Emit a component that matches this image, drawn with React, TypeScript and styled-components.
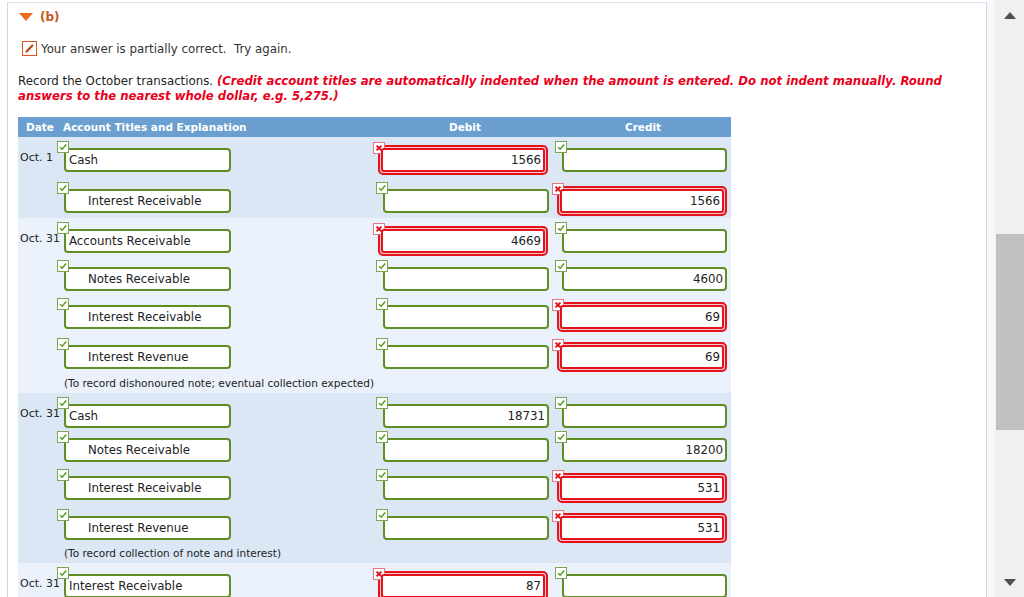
import React from 'react';
import styled, { createGlobalStyle } from 'styled-components';

/* types */
type Status = 'ok' | 'bad';
type Amount = { value?: string; status: Status };
type Entry = {
  date?: string;
  account: string;
  indent?: boolean;
  debit: Amount;
  credit: Amount;
  height: number;
};
type Group = {
  shade: 'dark' | 'light';
  entries: Entry[];
  note?: string;
  noteHeight?: number;
};

const ok = (value?: string): Amount => ({ value, status: 'ok' });
const bad = (value?: string): Amount => ({ value, status: 'bad' });

const groups: Group[] = [
  {
    shade: 'dark',
    entries: [
      { date: 'Oct. 1', account: 'Cash', debit: bad('1566'), credit: ok(), height: 41 },
      { account: 'Interest Receivable', indent: true, debit: ok(), credit: bad('1566'), height: 40 },
    ],
  },
  {
    shade: 'light',
    entries: [
      { date: 'Oct. 31', account: 'Accounts Receivable', debit: bad('4669'), credit: ok(), height: 38 },
      { account: 'Notes Receivable', indent: true, debit: ok(), credit: ok('4600'), height: 38 },
      { account: 'Interest Receivable', indent: true, debit: ok(), credit: bad('69'), height: 40 },
      { account: 'Interest Revenue', indent: true, debit: ok(), credit: bad('69'), height: 40 },
    ],
    note: '(To record dishonoured note; eventual collection expected)',
    noteHeight: 19,
  },
  {
    shade: 'dark',
    entries: [
      { date: 'Oct. 31', account: 'Cash', debit: ok('18731'), credit: ok(), height: 34 },
      { account: 'Notes Receivable', indent: true, debit: ok(), credit: ok('18200'), height: 38 },
      { account: 'Interest Receivable', indent: true, debit: ok(), credit: bad('531'), height: 40 },
      { account: 'Interest Revenue', indent: true, debit: ok(), credit: bad('531'), height: 38 },
    ],
    note: '(To record collection of note and interest)',
    noteHeight: 20,
  },
  {
    shade: 'light',
    entries: [
      { date: 'Oct. 31', account: 'Interest Receivable', debit: bad('87'), credit: ok(), height: 40 },
    ],
  },
];

const GlobalStyle = createGlobalStyle`
  html, body {
    margin: 0;
    padding: 0;
    overflow: hidden;
    background: #ffffff;
  }
  body {
    font-family: 'DejaVu Sans', Verdana, sans-serif;
    font-size: 11.8px;
    color: #222222;
  }
`;

/* icons */
const CheckMark: React.FC<{ status: Status }> = ({ status }) => (
  <MarkBox status={status}>
    <svg width="10" height="10" viewBox="0 0 10 10">
      {status === 'ok' ? (
        <path d="M2 5.2 L4.2 7.2 L8.2 2.6" fill="none" stroke="#5c9a1e" strokeWidth="1.5" />
      ) : (
        <path d="M2.6 2.6 L7.4 7.4 M7.4 2.6 L2.6 7.4" fill="none" stroke="#e2101c" strokeWidth="2" />
      )}
    </svg>
  </MarkBox>
);

const PartialIcon = () => (
  <PartialBox>
    <svg width="13" height="13" viewBox="0 0 13 13">
      <path d="M3.6 9.6 L9.4 3.6" stroke="#c0461a" strokeWidth="2.2" strokeLinecap="round" />
    </svg>
  </PartialBox>
);

const AmountField: React.FC<{ amount: Amount; side: 'debit' | 'credit' }> = ({ amount, side }) => (
  <FieldSlot side={side}>
    {amount.status === 'bad' ? (
      <BadRing>
        <CheckMark status="bad" />
        <BadInput>{amount.value}</BadInput>
      </BadRing>
    ) : (
      <GoodInput wide={side === 'debit'}>
        <CheckMark status="ok" />
        {amount.value}
      </GoodInput>
    )}
  </FieldSlot>
);

const App: React.FC = () => {
  return (
    <>
      <GlobalStyle />
      <Screen>
        <Frame>
          <Content>
            <PartTitle>
              <Caret />
              <span>(b)</span>
            </PartTitle>

            <Feedback>
              <PartialIcon />
              <span>Your answer is partially correct.&nbsp; Try again.</span>
            </Feedback>

            <Instructions>
              Record the October transactions.{' '}
              <Warn>
                (Credit account titles are automatically indented when the amount is entered. Do not indent
                manually. Round answers to the nearest whole dollar, e.g. 5,275.)
              </Warn>
            </Instructions>

            <Journal>
              <HeadRow>
                <HeadCell>Date</HeadCell>
                <HeadCell>Account Titles and Explanation</HeadCell>
                <HeadCell center>Debit</HeadCell>
                <HeadCell center>Credit</HeadCell>
              </HeadRow>
              {groups.map((group, gi) => (
                <GroupBlock key={gi} shade={group.shade}>
                  {group.entries.map((entry, ei) => (
                    <EntryRow key={ei} h={entry.height}>
                      <DateCell>{entry.date}</DateCell>
                      <AccountSlot>
                        <AccountInput indent={entry.indent}>
                          <CheckMark status="ok" />
                          {entry.account}
                        </AccountInput>
                      </AccountSlot>
                      <AmountField amount={entry.debit} side="debit" />
                      <AmountField amount={entry.credit} side="credit" />
                    </EntryRow>
                  ))}
                  {group.note && <NoteRow h={group.noteHeight ?? 20}>{group.note}</NoteRow>}
                </GroupBlock>
              ))}
            </Journal>
          </Content>
        </Frame>
        <Gutter />
        <ScrollBar>
          <Arrow dir="up" />
          <Track>
            <Thumb />
          </Track>
          <Arrow dir="down" />
        </ScrollBar>
      </Screen>
    </>
  );
};

const Screen = styled.div`
  width: 1024px;
  height: 597px;
  display: flex;
  overflow: hidden;
`;

const Frame = styled.div`
  width: 979px;
  margin: 2px 0 0 7px;
  border-top: 1px solid #dde3ea;
  border-left: 1px solid #cfd8e4;
  border-right: 1px solid #cfd8e4;
  overflow: hidden;
`;

const Gutter = styled.div`
  width: 8px;
  background: #f5f9fc;
`;

const Content = styled.div`
  padding: 6px 0 0 10px;
`;

const PartTitle = styled.div`
  display: flex;
  align-items: center;
  gap: 7px;
  height: 16px;
  padding-left: 1px;
  font-weight: bold;
  font-size: 12px;
  color: #c4561a;
`;

const Caret = styled.div`
  width: 0;
  height: 0;
  border-left: 7px solid transparent;
  border-right: 7px solid transparent;
  border-top: 8px solid #ef6a1e;
`;

const Feedback = styled.div`
  display: flex;
  align-items: center;
  gap: 4px;
  margin-top: 16px;
  padding-left: 4px;
  color: #333333;
`;

const PartialBox = styled.div`
  width: 13px;
  height: 13px;
  border: 1.5px solid #d9561f;
  background: #ffffff;
  display: flex;
`;

const Instructions = styled.p`
  margin: 18px 0 0;
  width: 940px;
  line-height: 15px;
  color: #222222;
`;

const Warn = styled.span`
  color: #e8001c;
  font-weight: bold;
  font-style: italic;
  font-size: 11.7px;
`;

const Journal = styled.div`
  width: 713px;
  margin-top: 13px;
`;

const cols = '40px 317px 180px 176px';

const HeadRow = styled.div`
  display: grid;
  grid-template-columns: ${cols};
  height: 20px;
  align-items: center;
  background: #6a9fcf;
  color: #ffffff;
  font-weight: bold;
  font-size: 10.5px;
`;

const HeadCell = styled.div<{ center?: boolean }>`
  padding-left: ${(p) => (p.center ? 0 : 8)}px;
  text-align: ${(p) => (p.center ? 'center' : 'left')};
  &:nth-child(2) {
    padding-left: 5px;
  }
`;

const GroupBlock = styled.div<{ shade: 'dark' | 'light' }>`
  background: ${(p) => (p.shade === 'dark' ? '#dce7f5' : '#eaf1fb')};
`;

const EntryRow = styled.div<{ h: number }>`
  display: grid;
  grid-template-columns: ${cols};
  height: ${(p) => p.h}px;
  padding-top: 11px;
  box-sizing: border-box;
`;

const DateCell = styled.div`
  padding: 3px 0 0 2px;
  white-space: nowrap;
  line-height: 14px;
  font-size: 11px;
`;

const AccountSlot = styled.div`
  padding-left: 6px;
`;

const inputBase = `
  position: relative;
  box-sizing: border-box;
  height: 24px;
  display: flex;
  align-items: center;
  background: #ffffff;
  white-space: nowrap;
`;

const AccountInput = styled.div<{ indent?: boolean }>`
  ${inputBase}
  width: 167px;
  border: 2px solid #5e8e24;
  border-radius: 4px;
  padding-left: ${(p) => (p.indent ? 22 : 3)}px;
  font-size: 11.8px;
`;

const FieldSlot = styled.div<{ side: 'debit' | 'credit' }>`
  padding-left: ${(p) => (p.side === 'debit' ? 8 : 7)}px;
`;

const GoodInput = styled.div<{ wide?: boolean }>`
  ${inputBase}
  width: ${(p) => (p.wide ? 166 : 165)}px;
  border: 2px solid #5e8e24;
  border-radius: 4px;
  justify-content: flex-end;
  padding-right: 2px;
`;

const BadRing = styled.div`
  position: relative;
  box-sizing: border-box;
  width: 170px;
  height: 30px;
  margin: -3px 0 0 -5px;
  padding: 1px;
  border: 2px solid #e4141e;
  border-radius: 5px;
  background: #f7c4c7;
  & > span {
    top: -5px;
    left: -7px;
  }
`;

const BadInput = styled.div`
  ${inputBase}
  height: 100%;
  border: 2px solid #e4141e;
  border-radius: 3px;
  justify-content: flex-end;
  padding-right: 2px;
`;

const MarkBox = styled.span<{ status: Status }>`
  position: absolute;
  top: -9px;
  left: -9px;
  width: 12px;
  height: 12px;
  box-sizing: border-box;
  border: 1px solid ${(p) => (p.status === 'ok' ? '#7ea64e' : '#e07a80')};
  background: #ffffff;
  display: flex;
  align-items: center;
  justify-content: center;
`;

const NoteRow = styled.div<{ h: number }>`
  height: ${(p) => p.h}px;
  line-height: ${(p) => p.h}px;
  padding-left: 46px;
  font-size: 10.5px;
`;

const ScrollBar = styled.div`
  width: 29px;
  display: flex;
  flex-direction: column;
  background: #f0f0f0;
`;

const Arrow = styled.div<{ dir: 'up' | 'down' }>`
  height: 30px;
  display: flex;
  align-items: center;
  justify-content: center;
  &::before {
    content: '';
    border-left: 6px solid transparent;
    border-right: 6px solid transparent;
    ${(p) => (p.dir === 'up' ? 'border-bottom' : 'border-top')}: 7px solid #505050;
  }
`;

const Track = styled.div`
  flex: 1;
  padding-left: 1px;
`;

const Thumb = styled.div`
  margin-top: 204px;
  height: 196px;
  background: #c1c1c1;
`;

export default App;
